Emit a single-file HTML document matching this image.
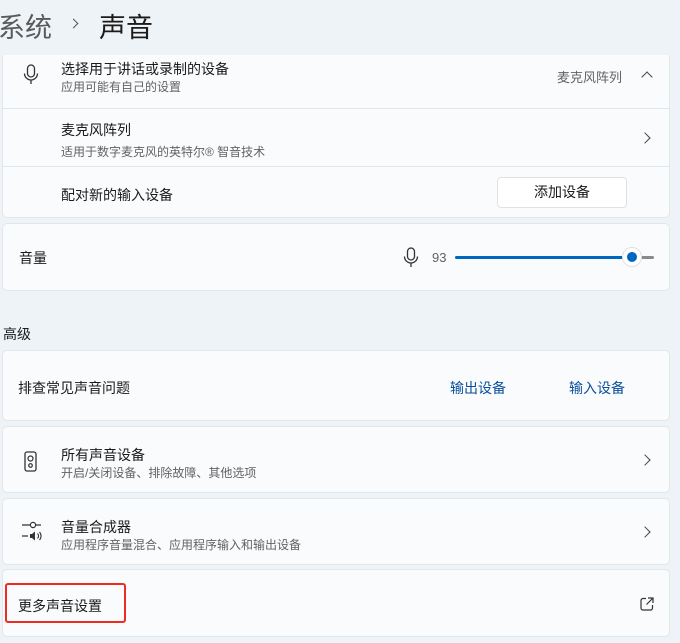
<!DOCTYPE html>
<html><head><meta charset="utf-8"><style>
*{box-sizing:border-box;margin:0;padding:0}
body{width:680px;height:643px;overflow:hidden;background:#eef3f7;font-family:"Liberation Sans","Noto Sans CJK SC",sans-serif;color:#1b1b1b;position:relative}
.a{position:absolute}
.card{position:absolute;left:2px;width:668px;background:#f9fbfd;border:1px solid #e3e7ea;border-radius:5px}
.t{font-size:14px;color:#1b1b1b;position:absolute;white-space:nowrap}
.s{font-size:12px;color:#606264;position:absolute;white-space:nowrap}
.hr{position:absolute;left:0;right:0;height:1px;background:#e3e7ea}
.chev{position:absolute;width:8px;height:8px;border-right:1.3px solid #444;border-top:1.3px solid #444;transform:rotate(45deg)}
</style></head><body>
<div class="a" style="left:-2px;top:6px;font-size:27px;color:#5a5a5a;white-space:nowrap">系统</div>
<div class="a" style="left:70px;top:20px;width:7px;height:7px;border-right:1.5px solid #555;border-top:1.5px solid #555;transform:rotate(45deg)"></div>
<div class="a" style="left:99px;top:6px;font-size:27px;color:#1b1b1b;white-space:nowrap">声音</div>

<div class="card" style="top:55px;height:163px;border-top:none;border-radius:0 0 5px 5px">
  <svg class="a" style="left:20px;top:9px" width="16" height="22" viewBox="0 0 16 22"><rect x="4.5" y="1" width="7" height="12" rx="3.5" fill="none" stroke="#333" stroke-width="1.3"/><path d="M1.5 9.5a6.5 6.5 0 0 0 13 0M8 16v4" fill="none" stroke="#333" stroke-width="1.3"/></svg>
  <div class="t" style="left:58px;top:4px">选择用于讲话或录制的设备</div>
  <div class="s" style="left:58px;top:23px">应用可能有自己的设置</div>
  <div class="s" style="left:554px;top:12px;font-size:13px">麦克风阵列</div>
  <div class="a" style="left:640px;top:18px;width:8px;height:8px;border-left:1.3px solid #444;border-top:1.3px solid #444;transform:rotate(45deg)"></div>
  <div class="hr" style="top:53px"></div>
  <div class="t" style="left:58px;top:65px">麦克风阵列</div>
  <div class="s" style="left:58px;top:88px">适用于数字麦克风的英特尔® 智音技术</div>
  <div class="chev" style="left:638px;top:79px"></div>
  <div class="hr" style="top:111px"></div>
  <div class="t" style="left:58px;top:130px">配对新的输入设备</div>
  <div class="a" style="left:494px;top:122px;width:130px;height:31px;background:#fff;border:1px solid #dfe2e5;border-radius:4px;font-size:14px;text-align:center;line-height:29px">添加设备</div>
</div>

<div class="card" style="top:223px;height:68px">
  <div class="t" style="left:16px;top:24px">音量</div>
  <svg class="a" style="left:400px;top:23px" width="16" height="22" viewBox="0 0 16 22"><rect x="4.5" y="1" width="7" height="12" rx="3.5" fill="none" stroke="#333" stroke-width="1.3"/><path d="M1.5 9.5a6.5 6.5 0 0 0 13 0M8 16v4" fill="none" stroke="#333" stroke-width="1.3"/></svg>
  <div class="s" style="left:429px;top:26px;font-size:13px">93</div>
  <div class="a" style="left:452px;top:32px;width:175px;height:3px;background:#0067c0;border-radius:2px"></div>
  <div class="a" style="left:636px;top:32px;width:15px;height:3px;background:#8a8a8a;border-radius:2px"></div>
  <div class="a" style="left:619px;top:23px;width:20px;height:20px;border-radius:50%;background:#fff;border:1px solid #e0e0e0"></div>
  <div class="a" style="left:624px;top:28px;width:10px;height:10px;border-radius:50%;background:#0067c0"></div>
</div>

<div class="t" style="left:3px;top:324px">高级</div>

<div class="card" style="top:350px;height:71px">
  <div class="t" style="left:15px;top:27px">排查常见声音问题</div>
  <div class="t" style="left:447px;top:27px;color:#0a4f9c">输出设备</div>
  <div class="t" style="left:566px;top:27px;color:#0a4f9c">输入设备</div>
</div>

<div class="card" style="top:426px;height:67px">
  <svg class="a" style="left:21px;top:24px" width="14" height="22" viewBox="0 0 14 22"><rect x="1" y="1" width="11" height="19" rx="2" fill="none" stroke="#333" stroke-width="1.3"/><circle cx="6.5" cy="7.5" r="2.5" fill="none" stroke="#333" stroke-width="1.2"/><circle cx="6.5" cy="14.5" r="1.8" fill="none" stroke="#333" stroke-width="1.2"/></svg>
  <div class="t" style="left:58px;top:18px">所有声音设备</div>
  <div class="s" style="left:58px;top:37px">开启/关闭设备、排除故障、其他选项</div>
  <div class="chev" style="left:638px;top:29px"></div>
</div>

<div class="card" style="top:498px;height:67px">
  <svg class="a" style="left:18px;top:20px" width="22" height="24" viewBox="0 0 22 24"><path d="M1 6h8M15 6h5M1 17h6" stroke="#333" stroke-width="1.3" fill="none"/><circle cx="12" cy="6" r="2.6" fill="none" stroke="#333" stroke-width="1.2"/><path d="M9 15h2l3-2.5v9L11 19H9z" fill="#333"/><path d="M16.5 14.5a3.5 3.5 0 0 1 0 5M18.5 13a6 6 0 0 1 0 8" stroke="#333" stroke-width="1.1" fill="none"/></svg>
  <div class="t" style="left:58px;top:18px">音量合成器</div>
  <div class="s" style="left:58px;top:37px">应用程序音量混合、应用程序输入和输出设备</div>
  <div class="chev" style="left:638px;top:29px"></div>
</div>

<div class="card" style="top:569px;height:68px">
  <div class="t" style="left:15px;top:26px">更多声音设置</div>
  <svg class="a" style="left:637px;top:27px" width="14" height="14" viewBox="0 0 14 14"><path d="M6 1.5H3a2 2 0 0 0-2 2v7.5a2 2 0 0 0 2 2h7.5a2 2 0 0 0 2-2V8M8 1h5v5M13 1L6.5 7.5" fill="none" stroke="#333" stroke-width="1.2"/></svg>
</div>
<div class="a" style="left:5px;top:583px;width:121px;height:40px;border:2px solid #f02b22;border-radius:3px"></div>
</body></html>
